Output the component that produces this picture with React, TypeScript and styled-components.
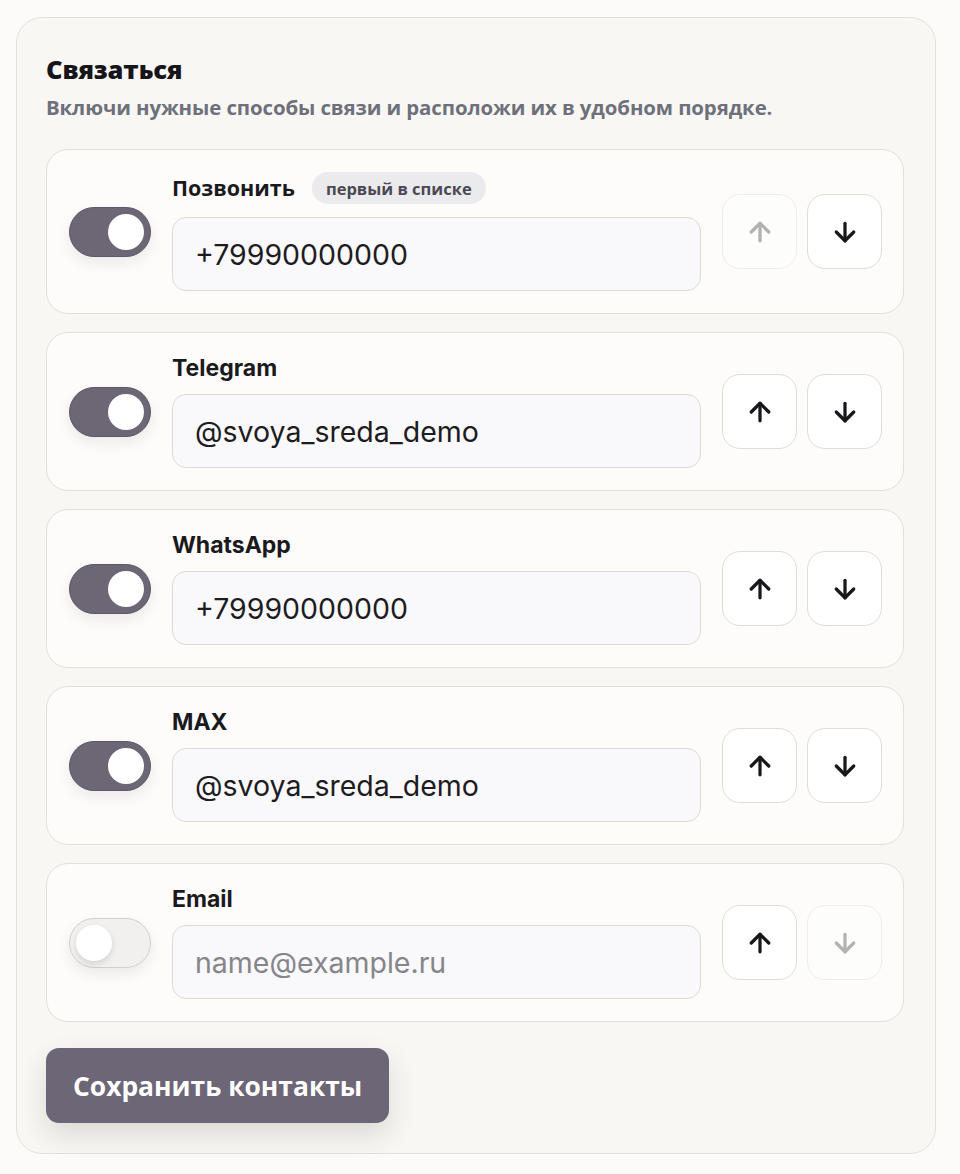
import React, { useState } from 'react';
import styled, { createGlobalStyle } from 'styled-components';
import { ArrowUp, ArrowDown } from 'lucide-react';

const GlobalStyle = createGlobalStyle`
  * { box-sizing: border-box; }
  body {
    margin: 0;
    background: #fcfbf9;
    font-family: "Inter", "Open Sans", sans-serif;
    color: #19181d;
  }
`;

const Page = styled.div`
  padding: 17px 24px 20px 16px;
`;

const Panel = styled.section`
  background: #f8f7f3;
  border: 1px solid #e4e1db;
  border-radius: 26px;
  padding: 28px 31px 30px 29px;
  display: flex;
  flex-direction: column;
`;

const Title = styled.h2`
  margin: 0;
  font-family: "Open Sans", "Noto Sans", sans-serif;
  font-weight: 800;
  font-size: 25.5px;
  line-height: 46px;
  color: #16151a;
  letter-spacing: -0.1px;
`;

const Subtitle = styled.p`
  margin: 0 0 27px;
  font-family: "Open Sans", "Noto Sans", sans-serif;
  font-weight: 700;
  font-size: 20.4px;
  line-height: 30px;
  color: #6e707b;
  letter-spacing: -0.1px;
`;

const List = styled.div`
  display: flex;
  flex-direction: column;
  gap: 18px;
`;

const Card = styled.div`
  display: grid;
  grid-template-columns: 82px 529px auto;
  column-gap: 21px;
  align-items: center;
  padding: 22px 23px 22px 22px;
  background: #fdfcfa;
  border: 1px solid #e3e0da;
  border-radius: 22px;
`;

const Toggle = styled.button<{ $on: boolean }>`
  position: relative;
  width: 82px;
  height: 50px;
  padding: 0;
  border-radius: 25px;
  border: 1px solid ${p => (p.$on ? '#5f5867' : '#d3d0cc')};
  background: ${p => (p.$on ? '#6d6675' : '#f1f0ee')};
  box-shadow: 0 6px 14px rgba(40, 30, 20, 0.08);
  cursor: pointer;

  &::after {
    content: '';
    position: absolute;
    top: 6px;
    left: ${p => (p.$on ? '38px' : '6px')};
    width: 36px;
    height: 36px;
    border-radius: 50%;
    background: #ffffff;
    box-shadow: ${p => (p.$on ? 'none' : '0 3px 6px rgba(0,0,0,0.12)')};
  }
`;

const Body = styled.div`
  display: flex;
  flex-direction: column;
  gap: 13px;
`;

const LabelRow = styled.div`
  display: flex;
  align-items: center;
  gap: 17px;
`;

const Label = styled.span<{ $cyr?: boolean }>`
  font-family: ${p => (p.$cyr ? '"Open Sans", "Noto Sans", sans-serif' : '"Inter", sans-serif')};
  font-weight: 700;
  font-size: ${p => (p.$cyr ? '21.5px' : '23px')};
  line-height: 26px;
  color: #1a191e;
`;

const Badge = styled.span`
  display: inline-flex;
  align-items: center;
  height: 32px;
  padding: 0 14px;
  border-radius: 16px;
  background: #ebeaed;
  font-family: "Open Sans", "Noto Sans", sans-serif;
  font-weight: 700;
  font-size: 16.5px;
  color: #4a4852;
`;

const Field = styled.input`
  width: 100%;
  height: 74px;
  padding: 0 22px;
  border: 1px solid #dedad5;
  border-radius: 14px;
  background: #f9f8fb;
  font-family: "Inter", sans-serif;
  font-size: 28.5px;
  color: #1d1c22;
  outline: none;

  &::placeholder {
    color: #86858b;
  }
`;

const Moves = styled.div`
  display: flex;
  gap: 10px;
`;

const MoveButton = styled.button`
  width: 75px;
  height: 75px;
  display: flex;
  align-items: center;
  justify-content: center;
  padding: 0;
  border-radius: 18px;
  border: 1px solid #e0ddd9;
  background: #ffffff;
  color: #18171c;
  cursor: pointer;

  &:disabled {
    border-color: #efedea;
    background: #fdfdfc;
    color: #b3b2b2;
    cursor: default;
  }
`;

const SaveButton = styled.button`
  align-self: flex-start;
  margin-top: 26px;
  height: 75px;
  padding: 0 27px;
  border: none;
  border-radius: 13px;
  background: #6d6676;
  color: #ffffff;
  font-family: "Open Sans", "Noto Sans", sans-serif;
  font-weight: 700;
  font-size: 26.4px;
  box-shadow: 0 12px 28px rgba(60, 45, 30, 0.14);
  cursor: pointer;
`;

type Contact = {
  id: string;
  label: string;
  value: string;
  placeholder: string;
  on: boolean;
  cyr?: boolean;
};

const initial: Contact[] = [
  { id: 'call', label: 'Позвонить', value: '+79990000000', placeholder: '+7...', on: true, cyr: true },
  { id: 'tg', label: 'Telegram', value: '@svoya_sreda_demo', placeholder: '@username', on: true },
  { id: 'wa', label: 'WhatsApp', value: '+79990000000', placeholder: '+7...', on: true },
  { id: 'max', label: 'MAX', value: '@svoya_sreda_demo', placeholder: '@username', on: true },
  { id: 'email', label: 'Email', value: '', placeholder: 'name@example.ru', on: false },
];

export default function App() {
  const [items, setItems] = useState<Contact[]>(initial);

  const move = (i: number, dir: number) => {
    const next = [...items];
    const [it] = next.splice(i, 1);
    next.splice(i + dir, 0, it);
    setItems(next);
  };

  const update = (id: string, patch: Partial<Contact>) =>
    setItems(items.map(c => (c.id === id ? { ...c, ...patch } : c)));

  return (
    <Page>
      <GlobalStyle />
      <Panel>
        <Title>Связаться</Title>
        <Subtitle>Включи нужные способы связи и расположи их в удобном порядке.</Subtitle>
        <List>
          {items.map((c, i) => (
            <Card key={c.id}>
              <Toggle $on={c.on} onClick={() => update(c.id, { on: !c.on })} aria-label={c.label} />
              <Body>
                <LabelRow>
                  <Label $cyr={c.cyr}>{c.label}</Label>
                  {i === 0 && <Badge>первый в списке</Badge>}
                </LabelRow>
                <Field
                  value={c.value}
                  placeholder={c.placeholder}
                  onChange={e => update(c.id, { value: e.target.value })}
                />
              </Body>
              <Moves>
                <MoveButton disabled={i === 0} onClick={() => move(i, -1)}>
                  <ArrowUp size={30} strokeWidth={2.6} />
                </MoveButton>
                <MoveButton disabled={i === items.length - 1} onClick={() => move(i, 1)}>
                  <ArrowDown size={30} strokeWidth={2.6} />
                </MoveButton>
              </Moves>
            </Card>
          ))}
        </List>
        <SaveButton>Сохранить контакты</SaveButton>
      </Panel>
    </Page>
  );
}
